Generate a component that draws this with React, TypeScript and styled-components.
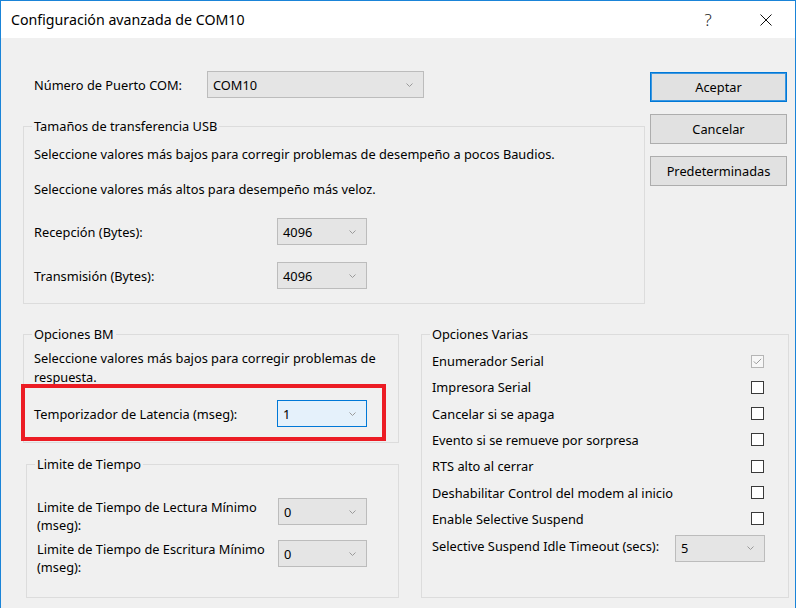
import React from "react";
import styled, { createGlobalStyle } from "styled-components";

const Global = createGlobalStyle`
  html, body { margin: 0; padding: 0; background: #f0f0f0; }
  body { font-family: "Noto Sans", "Segoe UI", sans-serif; color: #000; }
  * { box-sizing: border-box; }
`;

const Window = styled.div`
  width: 796px;
  height: 608px;
  border: 1px solid #1a84d8;
  border-bottom: none;
  background: #f0f0f0;
  display: flex;
  flex-direction: column;
  overflow: hidden;
`;

const TitleBar = styled.div`
  height: 37px;
  flex: none;
  background: #fff;
  display: flex;
  align-items: center;
  padding-left: 10px;
`;

const TitleText = styled.div`
  flex: 1;
  font-size: 14.2px;
  line-height: 20px;
  margin-top: 1px;
`;

const CaptionButton = styled.div`
  width: 58px;
  height: 37px;
  display: flex;
  align-items: center;
  justify-content: center;
  font-size: 17px;
  font-weight: 300;
  color: #222;
`;

const Body = styled.div`
  flex: 1;
  display: flex;
  flex-direction: column;
  padding: 33px 6px 0 22px;
  font-size: 12.8px;
`;

const TopSection = styled.div`
  display: flex;
  gap: 5px;
`;

const MainColumn = styled.div`
  width: 622px;
  display: flex;
  flex-direction: column;
`;

const ButtonColumn = styled.div`
  width: 137px;
  display: flex;
  flex-direction: column;
  gap: 12px;
  margin-top: 1px;
`;

const DialogButton = styled.button<{ $default?: boolean }>`
  height: 30px;
  width: 100%;
  font: inherit;
  font-size: 12.8px;
  color: #000;
  background: #e1e1e1;
  border: 1px solid ${(p) => (p.$default ? "#0078d7" : "#adadad")};
  box-shadow: ${(p) => (p.$default ? "inset 0 0 0 1px #3c97e0" : "none")};
  padding: 0;
`;

const ComRow = styled.div`
  display: flex;
  align-items: center;
  padding-left: 11px;
  height: 27px;
`;

const Label = styled.div<{ $width?: number; $mt?: number }>`
  width: ${(p) => (p.$width ? `${p.$width}px` : "auto")};
  flex: none;
  line-height: 18px;
  margin-top: ${(p) => p.$mt ?? 0}px;
`;

const Combo = styled.div<{ $width: number; $focused?: boolean }>`
  width: ${(p) => p.$width}px;
  height: 27px;
  flex: none;
  display: flex;
  align-items: center;
  justify-content: space-between;
  padding: 0 10px 0 5px;
  background: ${(p) => (p.$focused ? "#e5f1fb" : "#e5e5e5")};
  border: 1px solid ${(p) => (p.$focused ? "#0078d7" : "#bcbcbc")};
`;

const Group = styled.fieldset<{ $mt?: number; $ml?: number; $pt: number; $pb: number; $pr?: number; $grow?: boolean }>`
  margin: ${(p) => p.$mt ?? 0}px 0 0 ${(p) => p.$ml ?? 0}px;
  padding: ${(p) => p.$pt}px ${(p) => p.$pr ?? 10}px ${(p) => p.$pb}px 10px;
  border: 1px solid #dcdcdc;
  min-width: 0;
  display: flex;
  flex-direction: column;
  flex: ${(p) => (p.$grow ? 1 : "none")};
`;

const Legend = styled.legend`
  padding: 0 2px;
  margin-left: -2px;
  line-height: 18px;
  font-size: 12.8px;
`;

const Text = styled.div<{ $mt?: number }>`
  line-height: 19px;
  margin-top: ${(p) => p.$mt ?? 0}px;
`;

const FieldRow = styled.div<{ $mt?: number }>`
  position: relative;
  display: flex;
  align-items: center;
  height: 27px;
  margin-top: ${(p) => p.$mt ?? 0}px;
`;

const Highlight = styled.div`
  position: absolute;
  left: -13px;
  top: -16px;
  width: 365px;
  height: 57px;
  border: 4px solid #ec1c24;
  pointer-events: none;
`;

const TallRow = styled.div<{ $mt?: number }>`
  display: flex;
  align-items: flex-start;
  margin-top: ${(p) => p.$mt ?? 0}px;
`;

const BottomSection = styled.div`
  display: flex;
  gap: 22px;
  margin-top: 21px;
  align-items: stretch;
`;

const LeftColumn = styled.div`
  width: 376px;
  display: flex;
  flex-direction: column;
`;

const RightColumn = styled.div`
  width: 368px;
  display: flex;
  flex-direction: column;
`;

const OptionList = styled.div`
  display: flex;
  flex-direction: column;
  gap: 8.33px;
`;

const OptionRow = styled.div`
  display: flex;
  align-items: center;
  justify-content: space-between;
  height: 18px;
  line-height: 18px;
`;

const CheckBox = styled.div<{ $disabled?: boolean }>`
  width: 13px;
  height: 13px;
  border: 1px solid ${(p) => (p.$disabled ? "#b5b5b5" : "#3a3a3a")};
  background: ${(p) => (p.$disabled ? "#f7f7f7" : "#fff")};
  display: flex;
  align-items: center;
  justify-content: center;
  margin-right: 1px;
`;

const TimeoutRow = styled.div`
  display: flex;
  justify-content: space-between;
  align-items: flex-start;
  margin-top: 7px;
`;

const Chevron = () => (
  <svg width="7" height="4" viewBox="0 0 7 4">
    <path d="M0.5 0.5 L3.5 3.5 L6.5 0.5" fill="none" stroke="#9a9a9a" strokeWidth="1" />
  </svg>
);

const Select: React.FC<{ value: string; width: number; focused?: boolean }> = ({ value, width, focused }) => (
  <Combo $width={width} $focused={focused}>
    <span>{value}</span>
    <Chevron />
  </Combo>
);

const options = [
  { label: "Enumerador Serial", checked: true },
  { label: "Impresora Serial" },
  { label: "Cancelar si se apaga" },
  { label: "Evento si se remueve por sorpresa" },
  { label: "RTS alto al cerrar" },
  { label: "Deshabilitar Control del modem al inicio" },
  { label: "Enable Selective Suspend" },
];

export default function App() {
  return (
    <>
      <Global />
      <Window>
        <TitleBar>
          <TitleText>Configuración avanzada de COM10</TitleText>
          <CaptionButton>?</CaptionButton>
          <CaptionButton>
            <svg width="12" height="12" viewBox="0 0 12 12">
              <path d="M0.5 0.5 L11.5 11.5 M11.5 0.5 L0.5 11.5" stroke="#111" strokeWidth="1" fill="none" />
            </svg>
          </CaptionButton>
        </TitleBar>
        <Body>
          <TopSection>
            <MainColumn>
              <ComRow>
                <Label $width={173}>Número de Puerto COM:</Label>
                <Select value="COM10" width={217} />
              </ComRow>
              <Group $mt={19} $pt={10} $pb={14}>
                <Legend>Tamaños de transferencia USB</Legend>
                <Text>Seleccione valores más bajos para corregir problemas de desempeño a pocos Baudios.</Text>
                <Text $mt={16}>Seleccione valores más altos para desempeño más veloz.</Text>
                <FieldRow $mt={19}>
                  <Label $width={243}>Recepción (Bytes):</Label>
                  <Select value="4096" width={90} />
                </FieldRow>
                <FieldRow $mt={17}>
                  <Label $width={243}>Transmisión (Bytes):</Label>
                  <Select value="4096" width={90} />
                </FieldRow>
              </Group>
            </MainColumn>
            <ButtonColumn>
              <DialogButton $default>Aceptar</DialogButton>
              <DialogButton>Cancelar</DialogButton>
              <DialogButton>Predeterminadas</DialogButton>
            </ButtonColumn>
          </TopSection>
          <BottomSection>
            <LeftColumn>
              <Group $pt={6} $pb={15}>
                <Legend>Opciones BM</Legend>
                <Text>
                  Seleccione valores más bajos para corregir problemas de
                  <br />
                  respuesta.
                </Text>
                <FieldRow $mt={13}>
                  <Label $width={243}>Temporizador de Latencia (mseg):</Label>
                  <Select value="1" width={90} focused />
                  <Highlight />
                </FieldRow>
              </Group>
              <Group $mt={12} $ml={3} $pt={25} $pb={21}>
                <Legend>Limite de Tiempo</Legend>
                <TallRow>
                  <Label $width={241}>
                    Limite de Tiempo de Lectura Mínimo
                    <br />
                    (mseg):
                  </Label>
                  <Select value="0" width={89} />
                </TallRow>
                <TallRow $mt={6}>
                  <Label $width={241}>
                    Limite de Tiempo de Escritura Mínimo
                    <br />
                    (mseg):
                  </Label>
                  <Select value="0" width={89} />
                </TallRow>
              </Group>
            </LeftColumn>
            <RightColumn>
              <Group $pt={9} $pb={0} $pr={23} $grow>
                <Legend>Opciones Varias</Legend>
                <OptionList>
                  {options.map((o) => (
                    <OptionRow key={o.label}>
                      <span>{o.label}</span>
                      <CheckBox $disabled={o.checked}>
                        {o.checked && (
                          <svg width="9" height="7" viewBox="0 0 9 7">
                            <path d="M0.8 3.4 L3.2 5.8 L8.2 0.8" fill="none" stroke="#9a9a9a" strokeWidth="1" />
                          </svg>
                        )}
                      </CheckBox>
                    </OptionRow>
                  ))}
                </OptionList>
                <TimeoutRow>
                  <Label $mt={2}>Selective Suspend Idle Timeout (secs):</Label>
                  <Select value="5" width={90} />
                </TimeoutRow>
              </Group>
            </RightColumn>
          </BottomSection>
        </Body>
      </Window>
    </>
  );
}
